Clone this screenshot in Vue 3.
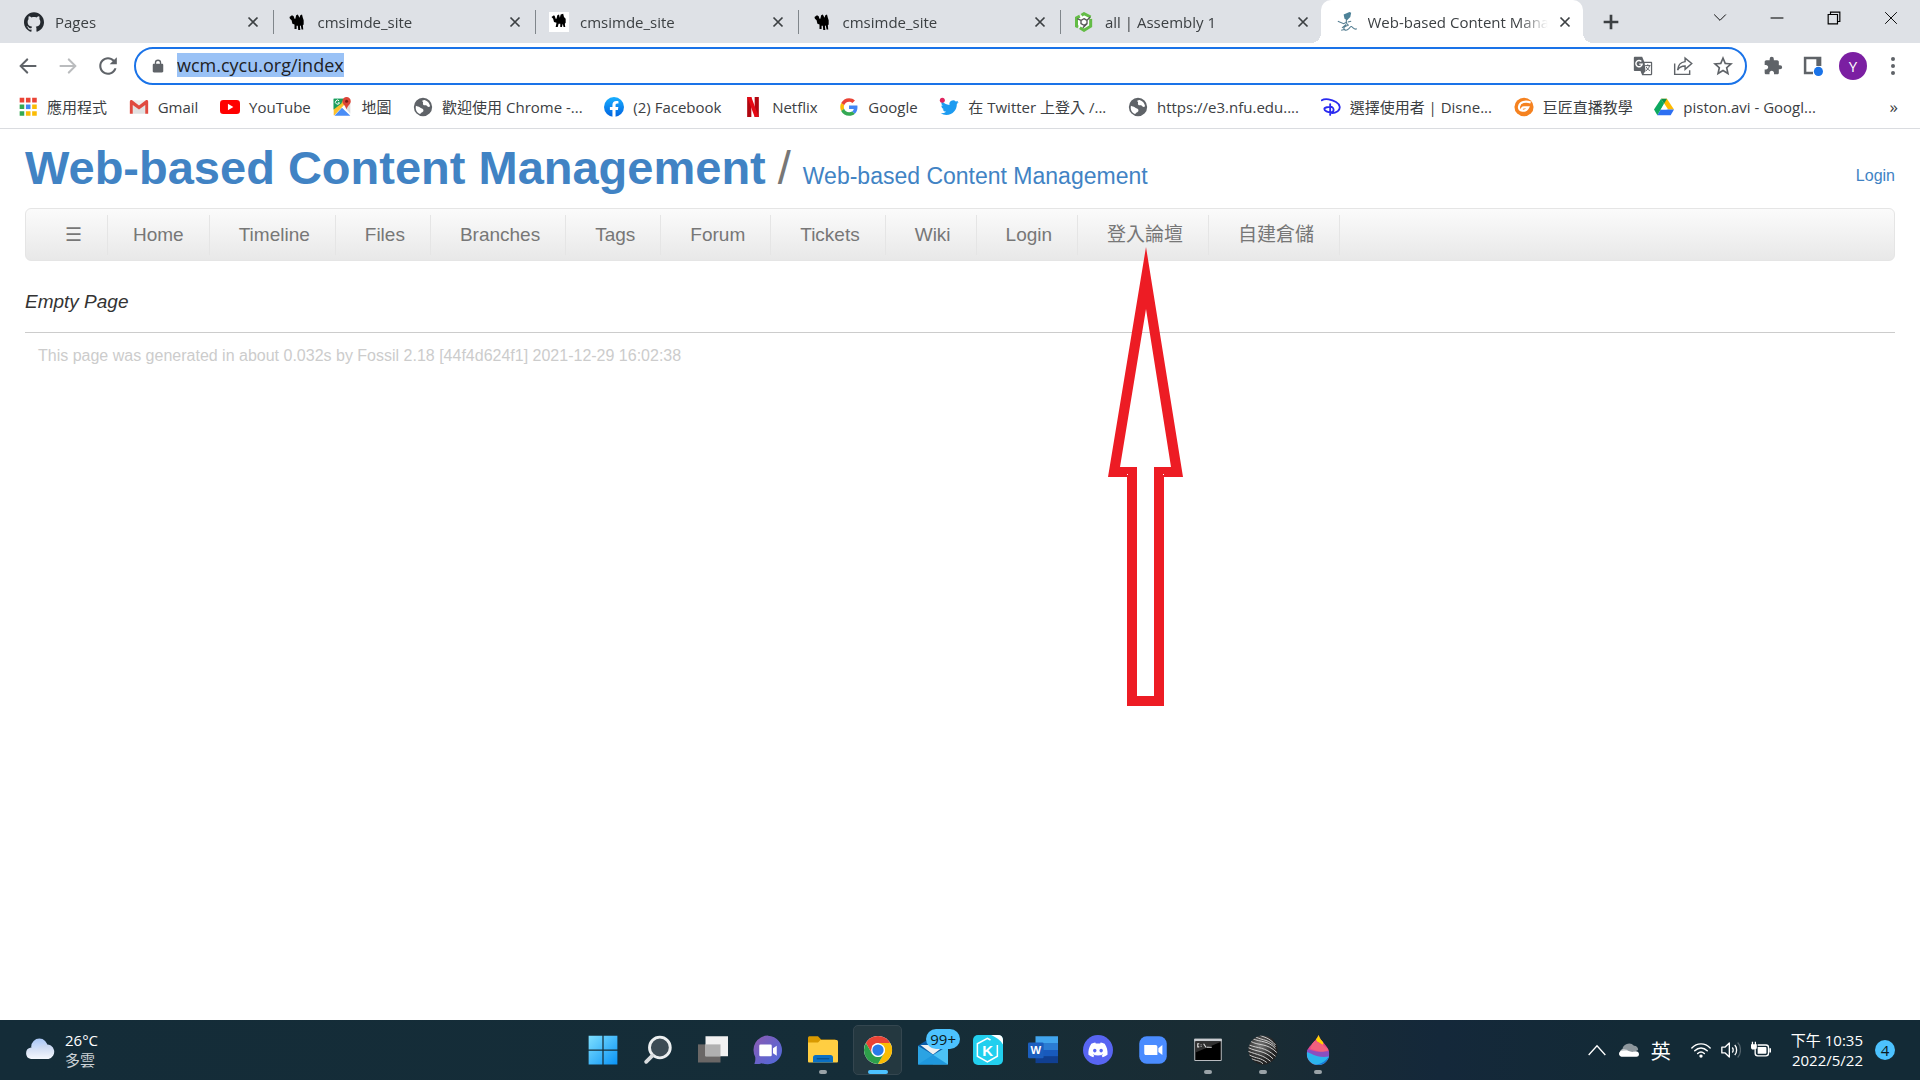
<script setup>
import { onMounted, ref } from 'vue'

const icons = {
  github: '<path fill="#24292f" d="M12 .297c-6.63 0-12 5.373-12 12 0 5.303 3.438 9.8 8.205 11.385.6.113.82-.258.82-.577 0-.285-.01-1.04-.015-2.04-3.338.724-4.042-1.61-4.042-1.61C4.422 18.07 3.633 17.7 3.633 17.7c-1.087-.744.084-.729.084-.729 1.205.084 1.838 1.236 1.838 1.236 1.07 1.835 2.809 1.305 3.495.998.108-.776.417-1.305.76-1.605-2.665-.3-5.466-1.332-5.466-5.93 0-1.31.465-2.38 1.235-3.22-.135-.303-.54-1.523.105-3.176 0 0 1.005-.322 3.3 1.23.96-.267 1.98-.399 3-.405 1.02.006 2.04.138 3 .405 2.28-1.552 3.285-1.23 3.285-1.23.645 1.653.24 2.873.12 3.176.765.84 1.23 1.91 1.23 3.22 0 4.61-2.805 5.625-5.475 5.92.42.36.81 1.096.81 2.22 0 1.606-.015 2.896-.015 3.286 0 .315.21.69.825.57C20.565 22.092 24 17.592 24 12.297c0-6.627-5.373-12-12-12"/>',
  camel: '<path d="M3 6l3-2 2 1 1 3h1l1-4 2-1 2 4 1-3 2-1 1 4 1 3v5l-1 1 .500 5h-2l-1-5-1 1 .500 4.500h-2.500L13 16.500l-1.500 0v4H9V15l-2.500-1-1-4-2-2z"/>',
  camelWhite: '<path fill="#fff" d="M0 0h24v24H0z"/><path d="M3 6l3-2 1 1 1 3h1l1-4 2-1 1 4 1-4 3-1 1 4 2 2v5l-1 1 .500 4h-2l-1-4-1 4h-2v-4l-2 0-1 4H8l1-5-3-1-1-4z"/>',
  onshape: '<path fill="#fff" d="M12 2l9 5v10l-9 5-9-5V7z"/><path fill="none" stroke="#63bc46" stroke-width="3.6" d="M7 19l5 3 8-5V8M20 6l-8-4-3 2M7 5L3 7v10l2 1"/><path fill="none" stroke="#555" stroke-width="1.6" d="M12 8l3.6 2v4L12 16l-3.6-2v-4zM8.4 10L4 8M15.6 14l-5 5M15.600 10l4-4"/>',
  fossil: '<path fill="#4d8298" d="M8 3l7-3 2 1-1 5-4 4-3-2z"/><path fill="none" stroke="#567f92" stroke-width="1.300" d="M12 8c-2 4-1 6 2 8M12 12L8 14 1 11M11 15l-5 4M14 16c-5 1-7 3-5 5s5 0 7-3 4 5 8 2M13 12l4-1M9 21l-4 1"/>',
  close: '<path fill="none" stroke="#3c4043" stroke-width="3.400" d="M3 3l18 18M21 3L3 21"/>',
  plus: '<path fill="none" stroke="#3c4043" stroke-width="4" d="M12 1v22M1 12h22"/>',
  winDown: '<path fill="none" stroke="#000" stroke-width="1.600" d="M2 6l10 10L22 6"/>',
  winMin: '<path fill="none" stroke="#000" stroke-width="1.800" d="M1 12h22"/>',
  winMax: '<path fill="none" stroke="#000" stroke-width="2" d="M2 6h16v16H2zM6 6V2h16v16h-4"/>',
  winClose: '<path fill="none" stroke="#000" stroke-width="1.600" d="M2 2l20 20M22 2L2 22"/>',
  back: '<path fill="currentColor" d="M22 10.900H6l6.500-6.500L11 2.500 1.500 12l9.500 9.500 1.500-1.900L6 13.100h16z"/>',
  reload: '<path fill="#5f6368" d="M19.400 4.600C17.500 2.700 14.900 1.500 12 1.500 6.200 1.500 1.500 6.200 1.500 12S6.200 22.500 12 22.500c4.900 0 9-3.300 10.100-7.900h-2.500C18.500 17.700 15.500 20 12 20c-4.400 0-8-3.600-8-8s3.600-8 8-8c2.200 0 4.100.9 5.600 2.400L14 10h8.600V1.400z"/>',
  lock: '<path fill="#5f6368" d="M19 8h-1.500V6.500a5.500 5.500 0 0 0-11 0V8H5c-1.100 0-2 .9-2 2v11c0 1.100.9 2 2 2h14c1.100 0 2-.9 2-2V10c0-1.100-.9-2-2-2zM8.800 6.500a3.200 3.200 0 0 1 6.400 0V8H8.800z"/>',
  translate: '<path fill="#5f6368" d="M2 1h9l2.500 6H22c.6 0 1 .4 1 1v14c0 .6-.4 1-1 1H11l-2-5H2c-.6 0-1-.4-1-1V2c0-.6.400-1 1-1z"/><path fill="#fff" d="M14 8.500h7.500v13h-9l2.500-3.500z"/><path fill="none" stroke="#fff" stroke-width="1.700" d="M10 6.500a3.800 3.800 0 1 0 1 3.200H7.500"/><path fill="none" stroke="#5f6368" stroke-width="1.200" d="M14.500 11.500h6.500M17.700 10v1.500M19.800 11.500c-.5 3-2.500 5-4.500 6.500M15.800 13c.8 2 2.500 3.500 4.500 4.500"/>',
  share: '<path fill="none" stroke="#5f6368" stroke-width="1.700" d="M2 9v13h18v-5M14.500 2.500L22.500 9l-8 7v-4C10 12 7 14 5.500 17 6 11 9 7.500 14.500 6.800z"/>',
  star: '<path fill="#5f6368" d="M24 8.800l-8.600-.8L12 0 8.600 8 0 8.800l6.500 5.700L4.600 23 12 18.500 19.400 23l-1.900-8.500zM12 16.200l-4.500 2.800 1.200-5.200-4-3.500 5.300-.4L12 5l2 4.900 5.300.4-4 3.500 1.200 5.200z"/>',
  puzzle: '<path fill="#5f6368" d="M20.500 11H19V7c0-1.100-.9-2-2-2h-4V3.500a2.500 2.500 0 0 0-5 0V5H4c-1.100 0-1.990.9-1.990 2v3.800H3.500c1.490 0 2.700 1.210 2.700 2.700s-1.210 2.700-2.700 2.700H2V20c0 1.100.9 2 2 2h3.800v-1.500c0-1.490 1.210-2.700 2.700-2.700s2.700 1.210 2.700 2.700V22H17c1.100 0 2-.9 2-2v-4h1.500a2.500 2.500 0 0 0 0-5z"/>',
  panel: '<path fill="#5f6368" d="M1 1h21v11h-6V4H4v15h8v3H1z"/><circle cx="18.500" cy="18.500" r="5.500" fill="#1a73e8"/>',
  dots: '<g fill="#5f6368"><circle cx="12" cy="3.500" r="2.400"/><circle cx="12" cy="12" r="2.400"/><circle cx="12" cy="20.500" r="2.400"/></g>',
  apps: '<path fill="#ea4335" d="M2 1h5.500v5.500H2zM9.500 1H15v5.500H9.500zM17 1h5.500v5.500H17z"/><path fill="#34a853" d="M2 9h5.500v5.500H2zM2 17h5.500v5.500H2z"/><path fill="#4285f4" d="M9.500 9H15v5.500H9.500z"/><path fill="#fbbc04" d="M17 9h5.500v5.500H17zM9.500 17H15v5.500H9.500zM17 17h5.500v5.500H17z"/>',
  gmail: '<path fill="#eee" d="M2 4h20v16H2z"/><path fill="#d8d8d8" d="M5 9l7 5 7-5v11H5z" opacity=".6"/><path fill="#e04a3f" d="M1 5.500C1 4 2.500 3 3.800 4L12 10.300 20.200 4C21.500 3 23 4 23 5.500V20h-3.500V9.500L12 15 4.500 9.500V20H1z"/>',
  youtube: '<rect y="3.500" width="24" height="17" rx="4" fill="#f00"/><path fill="#fff" d="M9.500 8.200v7.600l6.500-3.800z"/>',
  maps: '<path fill="#1fa463" d="M2 2h13L2 15z"/><path fill="#fff" d="M14 8L2 20v3h1L17 9z"/><path fill="#fbc02d" d="M2 14L14 3l3 4L3 22H2z"/><path fill="#4a8df6" d="M12 13l10 9.500H3z"/><path fill="#ddd" d="M15 12l7-5v13z"/><path fill="#1a9e5c" d="M2 2h12l-3 6-9 7z"/><path fill="#db4437" d="M17.500 0a5 5 0 0 0-5 5c0 4 4 5 5 10 1-5 5-6 5-10a5 5 0 0 0-5-5z"/><circle cx="17.500" cy="5" r="1.800" fill="#7b1c14"/><path fill="none" stroke="#fff" stroke-width="1.200" d="M8.500 4.500A2.500 2.500 0 1 0 9 7H7"/>',
  globe: '<path fill="#5f6368" fill-rule="evenodd" d="M12 1a11 11 0 1 0 0 22 11 11 0 0 0 0-22zM3.500 10.500c2 1.500 3 .5 5 2s4.500 1.500 4 4-3.500 1.500-3.500 4C5 19.500 2.500 15.500 3.500 10.500zM14 3.500c3.500 1 6 4 6.500 7.500-1.500 1.500-3 1-4-.5s-2.500 0-4-1 .5-3-1-4 1-2 2.500-2z"/>',
  facebook: '<defs><linearGradient id="fb" x1="0" y1="0" x2="0" y2="1"><stop stop-color="#19afff"/><stop offset="1" stop-color="#0062e0"/></linearGradient></defs><circle cx="12" cy="12" r="12" fill="url(#fb)"/><path fill="#fff" d="M10.125 23.900v-8.358H7.078v-3.470h3.047V9.430c0-3.007 1.792-4.669 4.533-4.669 1.312 0 2.686.235 2.686.235v2.953H15.830c-1.491 0-1.956.925-1.956 1.874v2.250h3.328l-.532 3.470h-2.796V23.900z"/>',
  netflix: '<path fill="#b1060f" d="M5 0h5v24H5zM14 0h5v24h-5z"/><path fill="#e50914" d="M5 0h5l9 24h-5z"/>',
  google: '<g transform="translate(1.500 1.500) scale(.44)"><path fill="#EA4335" d="M24 9.500c3.540 0 6.710 1.220 9.210 3.600l6.850-6.850C35.900 2.380 30.470 0 24 0 14.620 0 6.510 5.380 2.560 13.220l7.980 6.190C12.430 13.720 17.740 9.500 24 9.500z"/><path fill="#4285F4" d="M46.980 24.550c0-1.570-.15-3.090-.38-4.550H24v9.020h12.940c-.58 2.960-2.260 5.480-4.780 7.180l7.730 6c4.510-4.180 7.090-10.360 7.090-17.650z"/><path fill="#FBBC05" d="M10.530 28.590c-.48-1.450-.76-2.990-.76-4.590s.27-3.140.76-4.590l-7.980-6.190C.92 16.460 0 20.120 0 24c0 3.880.92 7.540 2.560 10.780l7.970-6.190z"/><path fill="#34A853" d="M24 48c6.480 0 11.930-2.130 15.890-5.810l-7.730-6c-2.150 1.450-4.920 2.300-8.160 2.300-6.260 0-11.570-4.220-13.470-9.910l-7.980 6.190C6.510 42.620 14.620 48 24 48z"/></g>',
  twitter: '<path fill="#1d9bf0" transform="translate(2 2) scale(.9)" d="M23.953 4.570a10 10 0 01-2.825.775 4.958 4.958 0 002.163-2.723c-.951.555-2.005.959-3.127 1.184a4.920 4.920 0 00-8.384 4.482C7.690 8.095 4.067 6.130 1.640 3.162a4.822 4.822 0 00-.666 2.475c0 1.710.870 3.213 2.188 4.096a4.904 4.904 0 01-2.228-.616v.060a4.923 4.923 0 003.946 4.827 4.996 4.996 0 01-2.212.085 4.936 4.936 0 004.604 3.417 9.867 9.867 0 01-6.102 2.105c-.390 0-.779-.023-1.170-.067a13.995 13.995 0 007.557 2.209c9.053 0 13.998-7.496 13.998-13.985 0-.210 0-.420-.015-.630A9.935 9.935 0 0024 4.590z"/><circle cx="4" cy="4" r="3" fill="#e0245e"/>',
  disney: '<path fill="none" stroke="#2a2af0" stroke-width="2.200" stroke-linecap="round" d="M1 4c4-3 12-1 17 2 5 3 6 8 2 11-3 2-7 2.500-9 1.500M11 8.500v13M13 12c-4-.5-9 .5-9 2.500s4 4 8 4c4-.5 4-5 1-6.500"/>',
  giant: '<ellipse cx="12" cy="12" rx="11.500" ry="11" fill="#f58220"/><path fill="none" stroke="#fff" stroke-width="2.600" d="M20 6.500c-6-2-13-1-14 5-1 6 8 7 11 1h-5c-2 0-3 1.500-2 3"/>',
  drive: '<path fill="#ffba00" d="M8.500 2h7L24 15h-7z"/><path fill="#2d6ff2" d="M4 22l4-7h16l-4 7z"/><path fill="#0a8f4f" d="M8.500 2h7l-3.500 6z"/><path fill="#0da960" d="M8.500 2L12 8 4 22 0 15z"/><path fill="#fff" d="M12 9l3.500 6h-7z"/>',
  cloud: '<defs><linearGradient id="cl" x1="0" y1="0" x2="0" y2="1"><stop stop-color="#a9c6f5"/><stop offset="1" stop-color="#e8effb"/></linearGradient><linearGradient id="cm" x1="0" y1="0" x2="0" y2="1"><stop stop-color="#c3d3f0"/><stop offset="1" stop-color="#f5f8fd"/></linearGradient></defs><circle cx="11.500" cy="9.300" r="6.500" fill="url(#cl)"/><path fill="url(#cm)" d="M4.800 10c2 0 3.500.8 4.500 2 1.200-2.500 3.500-4.300 7-4.300a5.800 5.800 0 0 1 2.500 11.400H4.800A4.600 4.600 0 0 1 4.800 10z"/>',
  start: '<defs><linearGradient id="st" x1="0" y1="0" x2="1" y2="1"><stop stop-color="#7fe0ff"/><stop offset="1" stop-color="#0a93f5"/></linearGradient></defs><path fill="url(#st)" d="M.500.500h11v11H.500zM12.500.500h11v11h-11zM.500 12.500h11v11H.500zM12.500 12.500h11v11h-11z"/>',
  search: '<circle cx="13.500" cy="10" r="8.300" fill="#3d4c55" stroke="#eceff0" stroke-width="2.300"/><path stroke="#d9dcde" stroke-width="3" stroke-linecap="round" d="M7.500 16.500L2.500 21.500"/>',
  taskview: '<path fill="#6a6766" d="M0 7.500h18V22H0z"/><path fill="#f1f1f1" d="M6 1h18v16H6z"/><path fill="#b0b0b0" d="M6 7.500h12V17H6z"/>',
  chat: '<defs><linearGradient id="ch" x1="0" y1="0" x2="1" y2="1"><stop stop-color="#8e5bb0"/><stop offset=".5" stop-color="#6a62c8"/><stop offset="1" stop-color="#4f6bdc"/></linearGradient></defs><path fill="url(#ch)" d="M12 .500a11.500 11.500 0 1 1-5 22c-2 .8-4.500.8-6 .5.800-1.500 1-3 .800-5.500A11.500 11.500 0 0 1 12 .500z"/><rect x="5" y="7.500" width="10" height="9.500" rx="1" fill="#fff"/><path fill="#fff" d="M16 10.500l3-2v8l-3-2z"/>',
  folder: '<path fill="#d99a00" d="M0 2.500C0 1.500.500 1 1.500 1H8l2.500 2.500H22V8H0z"/><path fill="#ffce42" d="M0 6h8l2-2h12.500c1 0 1.500.5 1.500 1.500V21c0 .6-.400 1-1 1H1c-.6 0-1-.4-1-1z"/><path fill="#0a70c4" d="M4 22v-4c0-1.200.800-2 2-2h12c1.200 0 2 .8 2 2v4z"/><path stroke="#064d8a" stroke-width="1" d="M7 19h10"/>',
  chrome: '<circle cx="12" cy="12" r="11.200" fill="#fff"/><path fill="#ea4335" d="M2.300 6.400A11.200 11.200 0 0 1 21.700 6.400H12a5.600 5.600 0 0 0-4.850 2.800L7.100 14.800z"/><path fill="#fbbc04" d="M21.700 6.400A11.200 11.200 0 0 1 11.900 23.200l4.900-8.400A5.600 5.600 0 0 0 16.800 9.200L12 6.400z"/><path fill="#2d9f4a" d="M11.900 23.200A11.200 11.200 0 0 1 2.300 6.400l4.850 8.400a5.600 5.600 0 0 0 9.700 0z"/><circle cx="12" cy="12" r="5.500" fill="#fff"/><circle cx="12" cy="12" r="4.500" fill="#2a7bea"/>',
  mail: '<path fill="#0a5ba6" d="M0 8.500L12 1l12 7.500-12 8z"/><path fill="#f0f0f0" d="M2 8h20l-10 7.500z"/><path fill="#2ba3e3" d="M0 8.500l12 7.300v7.700H0z"/><path fill="#4cc2f5" d="M24 8.500L12 16v7.500h12z"/><path fill="#1f98de" d="M0 23.500L12 15.800l12 7.700z"/>',
  kkbox: '<rect width="24" height="24" rx="4" fill="#22cfee"/><path fill="#fff" d="M14.500 0H20c2.500 0 4 1.500 4 4v3.500C22 4 18 1.500 14.500 0z"/><path fill="none" stroke="#fff" stroke-width="1.200" d="M14 4l-2.500-1.400L3.500 7v10l8 4.500 8-4.500V8"/><text x="11.800" y="16.400" font-family="Liberation Sans, sans-serif" font-size="12" font-weight="700" fill="#fff" text-anchor="middle">K</text>',
  word: '<path fill="#41a5ee" d="M6 1h18v6H6z"/><path fill="#2b7cd3" d="M6 6.500h18V12H6z"/><path fill="#185abd" d="M6 12h18v5.500H6z"/><path fill="#103f91" d="M6 17h18v5.500H6z"/><rect y="6" width="12.500" height="12.500" rx="1" fill="#1b5ebe"/><text x="6.200" y="15.400" font-family="Liberation Sans, sans-serif" font-size="9" font-weight="700" fill="#fff" text-anchor="middle">W</text>',
  discord: '<circle cx="12" cy="12" r="12" fill="#5865f2"/><path fill="#fff" transform="translate(4.300 4.200) scale(.64)" d="M20.317 4.370a19.800 19.800 0 0 0-4.885-1.515.074.074 0 0 0-.079.037c-.211.375-.445.865-.608 1.250-1.845-.276-3.680-.276-5.487 0-.164-.394-.406-.875-.618-1.250a.077.077 0 0 0-.079-.037 19.740 19.740 0 0 0-4.885 1.515.070.070 0 0 0-.032.028C.533 9.046-.319 13.580.099 18.058a.082.082 0 0 0 .031.056c2.053 1.508 4.041 2.423 5.993 3.029a.078.078 0 0 0 .084-.028c.462-.630.873-1.295 1.226-1.994l-1.914-.998.443-.430c3.928 1.793 8.180 1.793 12.061 0l.443.430-1.913.998c.360.698.772 1.363 1.225 1.994a.076.076 0 0 0 .084.028c1.961-.607 3.950-1.522 6.002-3.029a.077.077 0 0 0 .031-.056c.500-5.177-.838-9.674-3.548-13.660zM8.020 15.331c-1.182 0-2.157-1.086-2.157-2.419s.956-2.419 2.157-2.419c1.211 0 2.176 1.095 2.157 2.419 0 1.333-.956 2.419-2.157 2.419zm7.975 0c-1.183 0-2.157-1.086-2.157-2.419s.955-2.419 2.157-2.419c1.211 0 2.176 1.095 2.157 2.419 0 1.333-.946 2.419-2.157 2.419z"/>',
  zoomApp: '<rect x="1" y="1" width="22" height="22" rx="6" fill="#4a8cff"/><path fill="#fff" d="M5 8h9c1 0 1.500.7 1.500 1.500V16h-9C5.500 16 5 15.300 5 14.500zM16.300 10.500L19.500 8v8l-3.200-2.500z"/>',
  terminal: '<path fill="#000" stroke="#b9bcc0" stroke-width=".8" d="M1.400 3.400h21.200v17H1.400z"/><path fill="#c9ccd0" d="M1 3h22v2H1z"/><path fill="#444" opacity=".7" d="M2 5.500h20L2 14z"/><path fill="none" stroke="#ddd" stroke-width=".9" d="M5 7H3.800v2.500H5M6.500 7.500v.6M6.500 9v.6M8.500 7l2 3M11 9.800h4"/>',
  sphere: '<defs><radialGradient id="sp" cx=".4" cy=".35"><stop stop-color="#777"/><stop offset=".7" stop-color="#3a3a3a"/><stop offset="1" stop-color="#222"/></radialGradient><clipPath id="sc"><circle cx="12" cy="12" r="11.700"/></clipPath></defs><circle cx="12" cy="12" r="11.700" fill="url(#sp)"/><g clip-path="url(#sc)" fill="none" stroke="#cfcfcf" stroke-width=".8"><path d="M4 3c6 3 12 1 18 8M2 5c7 4 13 1 21 9M1 8c7 3 12 1 21 9M0 10c8 4 13 2 20 9M0 13c8 3 12 3 18 8M1 16c6 3 9 2 14 6M3 19c4 2 6 1 9 4M9 0c4 2 8 2 13 8M6 1.500c6 3 11 2 16 8"/></g>',
  paint: '<defs><clipPath id="pc"><path d="M12.500 0c1 5 8.500 8.500 8.500 15a9 9 0 0 1-18 0C3 9 10 6 12.500 0z"/></clipPath></defs><g clip-path="url(#pc)"><path fill="#e8478b" d="M0 0h24v24H0z"/><path fill="#ffd400" d="M9 0h8l-1 8-5-3z"/><path fill="#f2607d" d="M8 4l8 4 5 4-6 2-9-3z"/><path fill="#8a4fc0" d="M0 11c6-1 9 5 24 1v5C14 22 8 13 0 16z"/><path fill="#2bb5ee" d="M0 14c6-2 9 6 22 3v8H0z"/><path fill="#1579d6" d="M8 24c6 0 10-3 13-7v8z"/></g>',
  up: '<path fill="none" stroke="#fff" stroke-width="1.600" d="M2 18L12 7l10 11"/>',
  onedrive: '<path fill="#8e979d" d="M4 12a8 8 0 0 1 14-5c3 0 5 2 5 5l-9 4z"/><path fill="#c4c9cc" d="M1 15c0-3 3-5 6-4 4 0 6 4 9 6H3z"/><path fill="#fff" d="M3 20c-2-.5-3-2-3-3.500 0-2 2-3.500 5-3.500l4-.5 7 2c4-2 8-1 8 2.500 0 2-1.500 3-3 3z"/>',
  wifi: '<path fill="none" stroke="#fff" stroke-width="1.700" stroke-linecap="round" d="M1 9.500c6-6.500 16-6.500 22 0M4.500 13c4.500-4.500 10.500-4.500 15 0M8 16.300c2.500-2.300 5.500-2.300 8 0"/><circle cx="12" cy="19.300" r="2" fill="#fff"/>',
  sound: '<path fill="none" stroke="#fff" stroke-width="1.600" stroke-linejoin="round" d="M1 8.500h4l5-5v17l-5-5H1zM13.500 9c1.500 1.500 1.500 4.500 0 6M16.500 6c3 3 3 9 0 12"/><path fill="none" stroke="#53636c" stroke-width="1.500" d="M20 3c4.500 4.500 4.500 13.500 0 18"/>',
  battery: '<path fill="none" stroke="#fff" stroke-width="1.600" d="M8 6h10c1.700 0 3 1.200 3 3v7c0 1.800-1.300 3-3 3H8c-1.700 0-3-1-3-3v-5"/><path fill="#fff" d="M8 8.500h9.500c.6 0 1 .4 1 1v6c0 .6-.400 1-1 1H8zM22 10h2v5h-2zM1 2h1.500v3h2V2H6v3h1v4c0 1.500-1 2.500-2.500 2.500h-2C1 11.500 0 10.500 0 9V5h1z"/>'
}

const tabs = [
  { icon: 'github', title: 'Pages' },
  { icon: 'camel', title: 'cmsimde_site' },
  { icon: 'camelWhite', title: 'cmsimde_site' },
  { icon: 'camel', title: 'cmsimde_site' },
  { icon: 'onshape', title: 'all | Assembly 1', last: true },
  { icon: 'fossil', title: 'Web-based Content Management', active: true }
]

const bookmarks = [
  { icon: 'apps', title: '應用程式' },
  { icon: 'gmail', title: 'Gmail' },
  { icon: 'youtube', title: 'YouTube' },
  { icon: 'maps', title: '地圖' },
  { icon: 'globe', title: '歡迎使用 Chrome -...' },
  { icon: 'facebook', title: '(2) Facebook' },
  { icon: 'netflix', title: 'Netflix' },
  { icon: 'google', title: 'Google' },
  { icon: 'twitter', title: '在 Twitter 上登入 /...' },
  { icon: 'globe', title: 'https://e3.nfu.edu....' },
  { icon: 'disney', title: '選擇使用者 | Disne...' },
  { icon: 'giant', title: '巨匠直播教學' },
  { icon: 'drive', title: 'piston.avi - Googl...' }
]

const menu = ['Home', 'Timeline', 'Files', 'Branches', 'Tags', 'Forum', 'Tickets', 'Wiki', 'Login', '登入論壇', '自建倉儲']

const apps = [
  { icon: 'start', label: 'Start' },
  { icon: 'search', label: 'Search' },
  { icon: 'taskview', label: 'Task view' },
  { icon: 'chat', label: 'Chat' },
  { icon: 'folder', label: 'File Explorer', running: true },
  { icon: 'chrome', label: 'Chrome', active: true },
  { icon: 'mail', label: 'Mail', badge: '99+' },
  { icon: 'kkbox', label: 'KKBOX' },
  { icon: 'word', label: 'Word' },
  { icon: 'discord', label: 'Discord' },
  { icon: 'zoomApp', label: 'Zoom' },
  { icon: 'terminal', label: 'Command Prompt', running: true },
  { icon: 'sphere', label: 'Sphere', running: true },
  { icon: 'paint', label: 'Paint 3D', running: true }
]

const address = ref('wcm.cycu.org/index')
const addressBox = ref(null)

onMounted(() => {
  addressBox.value.focus()
  addressBox.value.select()
})
</script>

<template>
  <div class="screen">
    <div class="tabstrip">
      <div class="tabs">
        <div v-for="(tab, i) in tabs" :key="i" class="tab" :class="{ active: tab.active, last: tab.last }">
          <svg class="icon20" viewBox="0 0 24 24" v-html="icons[tab.icon]"></svg>
          <span class="tab-title">{{ tab.title }}</span>
          <button class="plain" aria-label="Close tab"><svg class="icon12" viewBox="0 0 24 24" v-html="icons.close"></svg></button>
        </div>
      </div>
      <button class="plain new-tab" aria-label="New tab"><svg class="icon16" viewBox="0 0 24 24" v-html="icons.plus"></svg></button>
      <div class="window-buttons">
        <button v-for="name in ['winDown', 'winMin', 'winMax', 'winClose']" :key="name" class="plain" :aria-label="name">
          <svg class="icon14" viewBox="0 0 24 24" v-html="icons[name]"></svg>
        </button>
      </div>
    </div>

    <div class="toolbar">
      <button class="plain nav-button" aria-label="Back"><svg class="icon20" viewBox="0 0 24 24" v-html="icons.back"></svg></button>
      <button class="plain nav-button disabled" aria-label="Forward"><svg class="icon20 flipped" viewBox="0 0 24 24" v-html="icons.back"></svg></button>
      <button class="plain nav-button" aria-label="Reload"><svg class="icon20" viewBox="0 0 24 24" v-html="icons.reload"></svg></button>
      <div class="omnibox">
        <svg class="icon14" viewBox="0 0 24 24" v-html="icons.lock"></svg>
        <input ref="addressBox" v-model="address" class="address" type="text" aria-label="Address" spellcheck="false">
        <button v-for="name in ['translate', 'share', 'star']" :key="name" class="plain" :aria-label="name">
          <svg class="icon20" viewBox="0 0 24 24" v-html="icons[name]"></svg>
        </button>
      </div>
      <div class="extensions">
        <button class="plain" aria-label="Extensions"><svg class="icon20" viewBox="0 0 24 24" v-html="icons.puzzle"></svg></button>
        <button class="plain" aria-label="Side panel"><svg class="icon20" viewBox="0 0 24 24" v-html="icons.panel"></svg></button>
        <button class="plain avatar" aria-label="Profile">Y</button>
        <button class="plain" aria-label="Menu"><svg class="icon20" viewBox="0 0 24 24" v-html="icons.dots"></svg></button>
      </div>
    </div>

    <div class="bookmarks">
      <div class="bookmark-list">
        <a v-for="mark in bookmarks" :key="mark.title" href="#" class="bookmark">
          <svg class="icon20" viewBox="0 0 24 24" v-html="icons[mark.icon]"></svg>
          <span>{{ mark.title }}</span>
        </a>
      </div>
      <button class="plain more" aria-label="More bookmarks">»</button>
    </div>

    <main class="page">
      <header class="header">
        <h1 class="title"><a href="#">Web-based Content Management</a></h1>
        <span class="slash">/</span>
        <a href="#" class="subtitle">Web-based Content Management</a>
        <a href="#" class="login">Login</a>
      </header>
      <nav class="menu">
        <a href="#" class="burger" aria-label="Menu">☰</a>
        <a v-for="item in menu" :key="item" href="#">{{ item }}</a>
      </nav>
      <p class="empty">Empty Page</p>
      <footer class="footer">This page was generated in about 0.032s by Fossil 2.18 [44f4d624f1] 2021-12-29 16:02:38</footer>
      <svg class="pointer" viewBox="0 0 75 459">
        <path fill="#ed1c24" fill-rule="evenodd" d="M38 0L75 230H56V459H19V230H0zM38 62L12 220H29V449H46V220H63z" />
        <path fill="#fff" d="M19 227h1v1h-1zM55 227h1v1h-1z" />
      </svg>
    </main>

    <div class="taskbar">
      <div class="weather">
        <svg class="icon30" viewBox="0 0 24 24" v-html="icons.cloud"></svg>
        <div class="weather-text"><span>26°C</span><span class="dim">多雲</span></div>
      </div>
      <div class="apps">
        <button v-for="app in apps" :key="app.label" class="plain app" :class="{ active: app.active, running: app.running }" :aria-label="app.label">
          <svg class="icon30" viewBox="0 0 24 24" v-html="icons[app.icon]"></svg>
          <span v-if="app.badge" class="badge">{{ app.badge }}</span>
        </button>
      </div>
      <div class="tray">
        <svg class="icon20" viewBox="0 0 24 24" v-html="icons.up"></svg>
        <svg class="icon20" viewBox="0 0 24 24" v-html="icons.onedrive"></svg>
        <span class="ime">英</span>
        <div class="status">
          <svg class="icon20" viewBox="0 0 24 24" v-html="icons.wifi"></svg>
          <svg class="icon20" viewBox="0 0 24 24" v-html="icons.sound"></svg>
          <svg class="icon20" viewBox="0 0 24 24" v-html="icons.battery"></svg>
        </div>
        <div class="clock"><span>下午 10:35</span><span>2022/5/22</span></div>
        <span class="count">4</span>
      </div>
    </div>
  </div>
</template>

<style>
body {
  margin: 0;
}
</style>

<style scoped>
.screen {
  display: flex;
  flex-direction: column;
  min-height: 100vh;
  background: #fff;
  color: #3c4043;
  font-family: "Open Sans", "Noto Sans CJK TC", sans-serif;
  font-size: 15px;
}

a {
  color: inherit;
  text-decoration: none;
}

svg {
  display: block;
  flex: none;
}

.plain {
  display: flex;
  align-items: center;
  justify-content: center;
  padding: 0;
  border: 0;
  background: none;
  font: inherit;
  color: inherit;
}

.icon12 { width: 12px; height: 12px; }
.icon14 { width: 14px; height: 14px; }
.icon16 { width: 16px; height: 16px; }
.icon20 { width: 20px; height: 20px; }
.icon30 { width: 30px; height: 30px; }

/* Tab strip */
.tabstrip {
  display: flex;
  height: 43px;
  padding-left: 8px;
  background: #dee1e6;
}

.tabs {
  display: flex;
  flex: 0 1 1575px;
  min-width: 0;
}

.tab {
  position: relative;
  display: flex;
  flex: 1 1 0;
  align-items: center;
  gap: 11px;
  min-width: 0;
  padding: 0 12px 0 16px;
}

.tab::after {
  content: "";
  position: absolute;
  top: 10px;
  right: -3px;
  width: 1px;
  height: 24px;
  background: #80868b;
}

.tab.last::after {
  display: none;
}

.tab-title {
  flex: 1;
  overflow: hidden;
  white-space: nowrap;
  mask-image: linear-gradient(to right, #000 calc(100% - 30px), transparent);
}

.tab.active {
  border-radius: 10px 10px 0 0;
  background: #fff;
}

.tab.active::before,
.tab.active::after {
  content: "";
  position: absolute;
  top: auto;
  bottom: 0;
  width: 10px;
  height: 10px;
}

.tab.active::before {
  left: -10px;
  background: radial-gradient(circle at 0 0, transparent 10px, #fff 10px);
}

.tab.active::after {
  right: -10px;
  background: radial-gradient(circle at 100% 0, transparent 10px, #fff 10px);
}

.new-tab {
  width: 56px;
}

.window-buttons {
  display: flex;
  gap: 43px;
  height: 36px;
  margin-left: auto;
  padding-right: 22px;
}

/* Toolbar */
.toolbar {
  display: flex;
  align-items: center;
  padding: 4px 17px 3px 18px;
}

.nav-button {
  width: 20px;
  margin-right: 20px;
  color: #5f6368;
}

.disabled {
  color: #babcbe;
}

.flipped {
  transform: scaleX(-1);
}

.omnibox {
  display: flex;
  flex: 1;
  align-items: center;
  gap: 20px;
  box-sizing: border-box;
  height: 38px;
  margin-left: -4px;
  padding: 0 12px 0 15px;
  border: 2px solid #1a73e8;
  border-radius: 19px;
}

.address {
  flex: 1;
  min-width: 0;
  height: 26px;
  margin-left: -8px;
  padding: 0 0 2px;
  border: 0;
  outline: 0;
  background: none;
  color: #202124;
  font-family: "Open Sans", sans-serif;
  font-size: 18px;
}

.address::selection {
  background: #9ac2f6;
  color: #202124;
}

.extensions {
  display: flex;
  align-items: center;
  gap: 20px;
  margin-left: 16px;
}

.avatar {
  width: 28px;
  height: 28px;
  margin: 0 -4px;
  border-radius: 50%;
  background: #7b1fa2;
  color: #fff;
}

/* Bookmarks */
.bookmarks {
  display: flex;
  align-items: center;
  justify-content: space-between;
  box-sizing: border-box;
  height: 41px;
  padding: 0 22px 3px 18px;
  border-bottom: 1px solid #dadce0;
}

.bookmark-list {
  display: flex;
  flex: 0 1 1798px;
  justify-content: space-between;
}

.bookmark {
  display: flex;
  align-items: center;
  gap: 9px;
  white-space: nowrap;
}

.more {
  font-size: 17px;
}

/* Page */
.page {
  position: relative;
  flex: 1;
  padding: 0 25px;
  font-family: "Liberation Sans", "Noto Sans CJK TC", sans-serif;
}

.header {
  display: flex;
  align-items: baseline;
  height: 56px;
  padding: 11px 0 12px;
  line-height: 56px;
  white-space: nowrap;
  color: #4183c4;
}

.title {
  margin: 0;
  font-size: 47px;
}

.slash {
  margin: 0 12px;
  color: #777;
  font-size: 47px;
}

.subtitle {
  font-size: 23px;
}

.login {
  align-self: flex-end;
  margin: 0 0 8px auto;
  font-size: 16px;
  line-height: 24px;
}

.menu {
  display: flex;
  align-items: center;
  gap: 4px;
  box-sizing: border-box;
  height: 53px;
  border: 1px solid #e5e5e5;
  border-radius: 6px;
  background: linear-gradient(#fbfbfb, #e8e8e8);
  color: #777;
  font-size: 19px;
}

.menu a {
  padding: 0 25px;
  border-right: 1px solid #e5e5e5;
  line-height: 40px;
  white-space: nowrap;
}

.menu .burger {
  margin-right: -4px;
  padding-left: 39px;
}

.empty {
  margin: 29px 0 18px;
  color: #333;
  font-size: 19px;
  font-style: italic;
  line-height: 24px;
}

.footer {
  padding: 11px 13px;
  border-top: 1px solid #ccc;
  color: #ccc;
  font-size: 16px;
  line-height: 24px;
}

.pointer {
  position: absolute;
  top: 118px;
  left: 1108px;
  width: 75px;
  height: 459px;
}

/* Taskbar */
.taskbar {
  display: grid;
  grid-template-columns: 1fr auto 1fr;
  align-items: center;
  height: 60px;
  background: linear-gradient(to right, #142c38, #152d38 48%, #1a2c33 65%, #14283a 75%, #132a36 85%);
  color: #fff;
}

.weather {
  display: flex;
  align-items: center;
  gap: 10px;
  padding-left: 25px;
}

.weather-text,
.clock {
  display: flex;
  flex-direction: column;
  line-height: 20px;
}

.dim {
  color: #ccd2d6;
}

.apps {
  display: flex;
}

.app {
  position: relative;
  width: 55px;
  height: 50px;
}

.app.active::before {
  content: "";
  position: absolute;
  inset: 0 3px;
  border: 1px solid #34464f;
  border-radius: 5px;
  background: #243840;
}

.app svg {
  position: relative;
}

.app.active::after,
.app.running::after {
  content: "";
  position: absolute;
  bottom: 1px;
  width: 8px;
  height: 4px;
  border-radius: 2px;
  background: #9aa3a8;
}

.app.active::after {
  width: 20px;
  background: #4cc2ff;
}

.badge {
  position: absolute;
  top: 4px;
  right: 0;
  padding: 0 4px;
  border-radius: 10px;
  background: #4cc2ff;
  color: #0b1a22;
  line-height: 20px;
}

.tray {
  display: flex;
  align-items: center;
  justify-content: flex-end;
  gap: 12px;
  padding-right: 25px;
}

.ime {
  font-size: 20px;
}

.status {
  display: flex;
  gap: 10px;
  margin: 0 8px;
}

.clock {
  align-items: flex-end;
}

.count {
  width: 20px;
  border-radius: 50%;
  background: #4cc2ff;
  color: #0b1a22;
  line-height: 20px;
  text-align: center;
}
</style>
